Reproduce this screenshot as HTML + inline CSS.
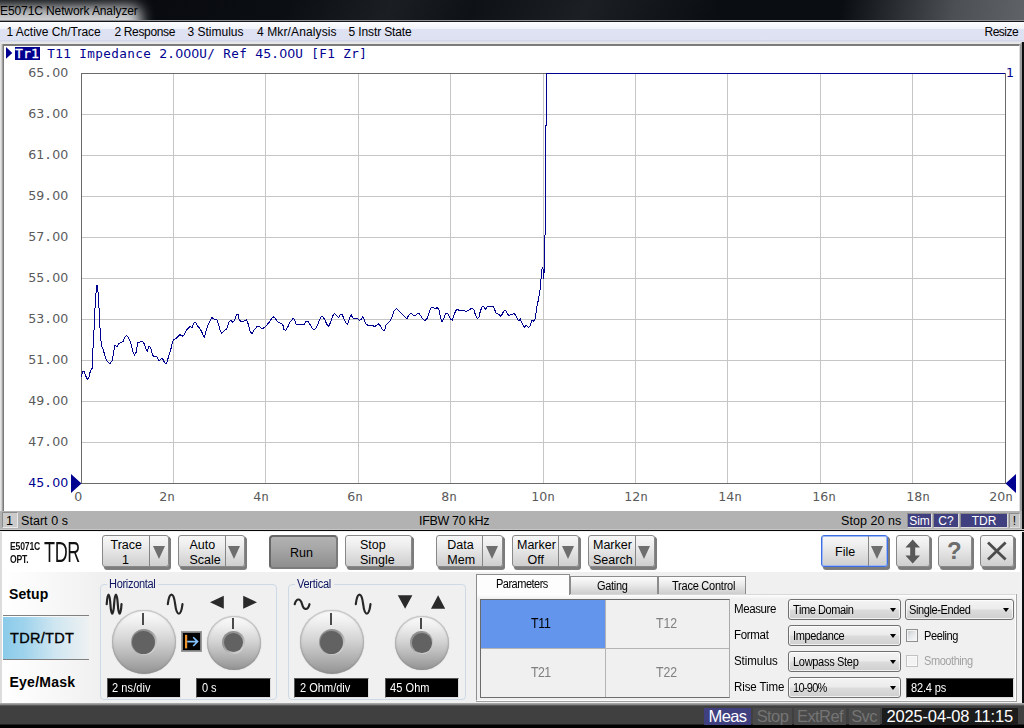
<!DOCTYPE html>
<html lang="en">
<head>
<meta charset="utf-8">
<title>E5071C Network Analyzer</title>
<style>
*{box-sizing:border-box;margin:0;padding:0}
html,body{width:1024px;height:728px;overflow:hidden;background:#0b0e13}
body{position:relative;font-family:"Liberation Sans",sans-serif;font-size:12px;color:#000}
.abs{position:absolute}
/* title bar */
#title{left:0;top:0;width:1024px;height:21px;overflow:hidden;
 background:
  linear-gradient(100deg,rgba(0,0,0,0) 0,rgba(0,0,0,0) 82%,rgba(98,102,106,.75) 93%,rgba(100,104,108,.95) 100%),
  linear-gradient(115deg,#05070a 0,#0b0e13 28%,#1b1f24 38%,#0e1116 46%,#1c2025 57%,#0a0d12 70%,#0a0d12 100%);}
#glow{position:absolute;left:-30px;top:6px;width:171px;height:40px;background:#cdcfd1;filter:blur(7px);border-radius:8px}
#title span{position:absolute;left:0;top:3.5px;font-size:12px;letter-spacing:-.1px;color:#000;white-space:nowrap}
#tline{left:0;top:20px;width:1024px;height:2px;background:linear-gradient(#8d9094 0,#8d9094 50%,#15171a 50%,#15171a 100%)}
/* menu */
#menu{left:0;top:22px;width:1024px;height:20px;background:linear-gradient(#fdfdff 0,#f1f3fb 34%,#dfe2f3 36%,#dde1f2 88%,#cfd3e6 94%,#e4e6ee 100%)}
#menu span{position:absolute;top:3px;font-size:12px;white-space:nowrap;color:#000}
/* plot window */
#win{left:0;top:42px;width:1022px;height:470px;background:#fff;border-style:solid;border-color:#e6e6e6 #9c9c9c #fff #dcdcdc;border-width:2px 2px 0 1px}
#win2{left:1px;top:44px;width:1019px;height:467px;border-style:solid;border-color:#7c7c7c #dedede #fff transparent;border-width:2px 1px 0 3px}
#win3{left:0;top:44px;width:4px;height:467px;background:linear-gradient(90deg,#e4e4e4 0,#e4e4e4 25%,#cecece 25%,#cecece 50%,#a2a2a2 50%,#a2a2a2 75%,#7a7a7a 75%,#7a7a7a 100%)}
#win4{left:3px;top:44px;width:1016px;height:1px;background:#6a6a6a}
#redge{left:1022px;top:42px;width:2px;height:686px;background:#0c0d0f}
/* channel status */
#cstat{left:0;top:511px;width:1022px;height:18px;background:#b2b2b2}
#cstat .t{position:absolute;top:2.5px;font-size:12.5px;letter-spacing:.05px;white-space:nowrap}
.sb{position:absolute;top:1.5px;height:15.5px;background:#404080;color:#fff;font-size:12px;text-align:center;line-height:15px;border:1px solid;border-color:#8c8c8c #dcdcdc #dcdcdc #8c8c8c}
#sep1{left:0;top:529px;width:1024px;height:3px;background:linear-gradient(#c6c6c6 0,#c6c6c6 33.3%,#080808 33.3%,#080808 70%,#f2f2f2 70%,#f2f2f2 100%)}
/* TDR panel */
#panel{left:0;top:532px;width:1022px;height:171px;background:#f0f0f0;border-left:2px solid #dcdcdc}
#ptop{left:2px;top:532px;width:1018px;height:40px;background:#fff}
#bbar{left:0;top:703px;width:1024px;height:25px;background:linear-gradient(#b4b4b4 0,#8a8a8a 6%,#404040 12%,#404040 84%,#000 88%,#000 100%)}
/*PCSS*/
.btn{position:absolute;top:535px;height:32px;border:1px solid #888;border-radius:3px;background:linear-gradient(#f8f8f8 0,#ececec 35%,#cecece 100%);box-shadow:1px 1px 0 #7c7c7c,2px 2px 0 #7c7c7c,2px 3px 0 #808080}
.btn i{position:absolute;top:0;width:1px;height:30px;background:#858585}
.btn b{position:absolute;top:10px;width:0;height:0;border-left:6.5px solid transparent;border-right:6.5px solid transparent;border-top:13px solid #6e6e6e}
.bt{position:absolute;font-size:12.5px;white-space:nowrap;line-height:14px;color:#000}
.knob{position:absolute;border-radius:50%;background:linear-gradient(180deg,#fbfbfb 0,#f0f0f0 18%,#d6d6d6 45%,#b6b6b6 72%,#929292 100%);box-shadow:inset 0 0 0 1px rgba(150,150,150,.35),inset 0 0 2.5px rgba(110,110,110,.55),0 0 1px rgba(130,130,130,.7)}
.knob u{position:absolute;border-radius:50%;background:linear-gradient(140deg,#858585 0,#9a9a9a 40%,#e2e2e2 100%)}
.knob u:after{content:'';position:absolute;left:1.7px;top:1.7px;right:1.7px;bottom:1.7px;border-radius:50%;background:#626262}
.knob s{position:absolute;width:2px;background:#4a4a4a}
.grp{position:absolute;border:1px solid #cddae6;border-radius:4px}
.grp span{position:absolute;top:-7px;left:6px;padding:0 2px;background:#f0f0f0;color:#1b2a72;font-size:12px;line-height:12px;letter-spacing:-.75px;white-space:nowrap}
.blk{position:absolute;height:19.5px;background:#000;color:#fff;font-size:12px;line-height:19px;padding-left:5px;letter-spacing:-.45px;white-space:nowrap;border:1px solid;border-color:#555 #ddd #ddd #555}
.ltab{position:absolute;left:9px;font-weight:bold;font-size:14px;white-space:nowrap}
.tab{position:absolute;font-size:12px;text-align:center;letter-spacing:-.8px;white-space:nowrap}
.cell{position:absolute;font-size:14px;text-align:center;color:#808080;letter-spacing:-1px;text-indent:-3px}
.lab{position:absolute;left:733px;font-size:12px;white-space:nowrap;letter-spacing:-.2px}
.cmb{position:absolute;height:21px;border:1px solid #707070;border-radius:3px;background:linear-gradient(#f4f4f4 0,#ebebeb 48%,#dcdcdc 52%,#cfcfcf 100%);font-size:12px;line-height:21px;padding-left:3px;letter-spacing:-.85px;white-space:nowrap;box-shadow:inset 0 0 0 1px rgba(255,255,255,.7)}
.cmb:after{content:"";position:absolute;right:4px;top:8px;border-left:3.5px solid transparent;border-right:3.5px solid transparent;border-top:4px solid #000}
.chk{position:absolute;left:905.5px;width:12.5px;height:12.5px;border:1px solid #8e8f8f;background:linear-gradient(135deg,#c4c8cc 0,#e6e8ea 50%,#fafafa 100%);box-shadow:inset 0 0 0 1px #f4f4f4}
.st{position:absolute;top:708px;height:17px;font-size:16.5px;line-height:17px;text-align:center;color:#747474;background:#4a4a4a;letter-spacing:-.6px;white-space:nowrap;overflow:hidden}
/*PCSSE*/
</style>
</head>
<body>
<div id="title" class="abs"><div id="glow"></div><span>E5071C Network Analyzer</span></div>
<div id="tline" class="abs"></div>
<div id="menu" class="abs">
<span style="left:6.5px">1 Active Ch/Trace</span>
<span style="left:114.5px;letter-spacing:-.35px">2 Response</span>
<span style="left:187.5px">3 Stimulus</span>
<span style="left:257px;letter-spacing:.12px">4 Mkr/Analysis</span>
<span style="left:348.5px;letter-spacing:-.12px">5 Instr State</span>
<span style="left:984.5px;letter-spacing:-.5px">Resize</span>
</div>
<div id="redge" class="abs"></div>
<div id="win" class="abs"></div>
<div id="win2" class="abs"></div><div id="win3" class="abs"></div>
<!--PLOTS-->
<svg class="abs" style="left:0;top:0" width="1024" height="728" viewBox="0 0 1024 728" shape-rendering="crispEdges">
<path d="M173.5 73.5V483.5M265.5 73.5V483.5M358.5 73.5V483.5M450.5 73.5V483.5M543.5 73.5V483.5M635.5 73.5V483.5M727.5 73.5V483.5M820.5 73.5V483.5M912.5 73.5V483.5M81.5 114.5H1005.5M81.5 155.5H1005.5M81.5 196.5H1005.5M81.5 237.5H1005.5M81.5 278.5H1005.5M81.5 319.5H1005.5M81.5 360.5H1005.5M81.5 401.5H1005.5M81.5 442.5H1005.5" stroke="#c6c6c6" stroke-width="1" fill="none"/>
<rect x="81.5" y="73.5" width="924.0" height="410.0" fill="none" stroke="#6a6a6a" stroke-width="1"/>
<polyline shape-rendering="crispEdges" points="81.3,377.1 82.6,371.8 84.2,371.3 85.9,376.3 87.2,379.6 88.9,377.1 90.5,370.5 92.1,368.5 92.5,355.7 93.8,335.9 94.6,314.5 95.8,294.7 96.8,285.7 97.6,285.2 98.2,294.7 99.1,309.5 99.9,326 100.7,339.2 101.7,346.6 103.2,349.1 104.8,355.7 106.5,360.3 108.5,362.6 110.3,363.6 112.2,360.3 113.6,352.4 114.7,345 117.2,346.6 119.2,343.3 123,341.7 125.1,336.7 126.4,335.4 128.4,337.5 130.7,342.5 132.8,351.5 134.5,355.3 136.1,352.4 137.8,342.8 140.3,341.8 142.4,341.3 144.4,344.1 146,349.1 147.3,351.5 148.8,346.6 150.5,347.1 151.8,352.4 153.1,355.7 155.1,357 156.7,356.5 159.2,360.9 160.8,359 162.5,358.6 164.6,362.6 166.3,363.6 167.4,360.6 169.1,354.8 170.7,349.9 172.4,342.5 174,339.5 176.8,337.9 179.8,334.6 182.8,336.2 184.4,334.3 186.7,329.6 189.7,326.8 192.1,327.3 193.8,323 195.4,322.4 197.9,326.3 200.4,329.3 202.5,333.4 204.2,337.5 206.1,331 208.6,323.5 211.9,317.4 214.4,319.4 216.9,319.8 218.5,324.4 220.1,330.1 221.8,333.4 224.3,330.6 226.7,329 229.2,321.4 230.9,320.2 232.8,322.5 234.7,319.8 236.6,314.4 238.1,314.7 239.4,320.3 241.3,321.4 244.1,321.1 246.4,319.8 248.4,324.5 250.3,332.3 252.2,333.4 254.2,330 256.6,326.9 258.9,326.4 261.3,328.1 263.6,328.1 266.7,325.3 269.8,321.4 271.9,318.3 273.8,316.7 276.1,319.8 278.8,322.5 281.6,323.4 283.1,325.6 283.9,329.7 285.9,330.3 287.8,326.9 290.2,321.9 293.3,318.3 294.8,320.3 295.9,323.8 298,325 304.2,324.5 305.8,321.9 308.1,321.4 310,324.5 312,328.1 314.1,329.7 316.3,327.7 318.3,323 320.6,317.2 322.5,316.7 324.5,319.1 326.6,323.8 328.4,326.6 330.8,321.9 332.8,315.9 334.4,313.1 336.6,315.6 338.6,317.5 340.6,314.4 342.2,314.4 344.1,319.1 345.9,323 347.5,324.5 349.5,318.3 351.1,314.4 352.7,318 357.3,318.4 359.7,320.3 361.6,319.1 362.5,316.7 364.1,319.4 365.6,323.4 368.3,325.8 372.2,325.3 374.5,326.6 376.6,325.3 378.4,323.8 380.8,326.6 382.8,330 384.7,330.3 385.9,325.3 388.1,323 390.5,320.3 392,316.7 394.1,310.9 396.3,308.4 406.9,318.6 408.8,315.2 410.8,313.1 413.4,315.3 415.9,315.3 417.5,313.3 419.4,313.6 421.7,317.5 424.8,320.6 426.9,318.8 428.8,314.1 430.6,308.1 432.7,307.7 435,308.4 437.3,307.8 438.9,309.7 440.5,316.7 442,322.2 443.6,319.1 445.6,313.6 447.2,313.1 449.1,315.9 450.9,319.4 452.2,320.3 453.8,315.9 455.6,310.9 457.2,309.2 460,310.9 461.6,310.2 463.9,310.5 465.9,311.6 469.4,309.7 471.7,308.1 473.8,309.7 475.6,315.2 477.5,318.8 478.8,317.5 480.3,311.3 482.2,306.6 483.8,306.9 485.8,309.7 487.3,306.6 492.8,306.3 494.4,308.9 495.9,312.8 498.3,314.1 500.9,316.3 502.5,313.6 504.1,310.5 505.6,310.5 507.2,313.6 508.8,315.6 511.6,314.4 514.4,313.6 516.3,316.7 518.6,320.9 520.2,318.8 521.7,322.5 524.1,327.3 526.4,325.3 528.4,327.7 530,326.1 531.9,320.3 533.4,321.4 535.3,318.3 536.5,309 538.5,299.1 540.1,289.2 541.1,277.7 541.4,271.1 542.6,267.3 543.1,269.4 543.2,278.5 544.1,272.7 544.5,236.5 545.5,234 545.5,126 546.5,125 546.5,73.5 1005,73.5" fill="none" stroke="#000090" stroke-width="1" stroke-linejoin="round"/>
<path shape-rendering="auto" d="M71 474L81.5 483.5L71 493Z M1016 474L1005.5 483.5L1016 493Z M6 47L12.3 52.9L6 58.8Z" fill="#000090"/>
<rect x="15" y="47" width="25" height="13" fill="#000090"/>
<g font-family="'DejaVu Sans Mono','Liberation Mono',monospace" font-size="12.6" shape-rendering="auto">
<text y="57.5" fill="#fff" stroke="#fff" stroke-width=".35"><tspan font-family="'DejaVu Sans Mono','Liberation Mono',monospace" x="15.2 23.2">Tr</tspan><tspan font-family="'DejaVu Sans','Liberation Mono',monospace" x="31.2">1</tspan></text>
<text y="57.5" fill="#000090"><tspan font-family="'DejaVu Sans Mono','Liberation Mono',monospace" x="47.2">T</tspan><tspan font-family="'DejaVu Sans','Liberation Mono',monospace" x="55.2 63.2 71.2">11 </tspan><tspan font-family="'DejaVu Sans Mono','Liberation Mono',monospace" x="79.2 87.2 95.2 103.2 111.2 119.2 127.2 135.2 143.2 151.2">Impedance </tspan><tspan font-family="'DejaVu Sans','Liberation Mono',monospace" x="159.2">2</tspan><tspan font-family="'DejaVu Sans Mono','Liberation Mono',monospace" x="167.2">.</tspan><tspan font-family="'DejaVu Sans','Liberation Mono',monospace" x="175.2 183.2 191.2">000</tspan><tspan font-family="'DejaVu Sans Mono','Liberation Mono',monospace" x="199.2 207.2 215.2 223.2 231.2 239.2 247.2">U/ Ref </tspan><tspan font-family="'DejaVu Sans','Liberation Mono',monospace" x="255.2 263.2">45</tspan><tspan font-family="'DejaVu Sans Mono','Liberation Mono',monospace" x="271.2">.</tspan><tspan font-family="'DejaVu Sans','Liberation Mono',monospace" x="279.2 287.2">00</tspan><tspan font-family="'DejaVu Sans Mono','Liberation Mono',monospace" x="295.2 303.2 311.2 319.2">U [F</tspan><tspan font-family="'DejaVu Sans','Liberation Mono',monospace" x="327.2 335.2">1 </tspan><tspan font-family="'DejaVu Sans Mono','Liberation Mono',monospace" x="343.2 351.2 359.2">Zr]</tspan></text>
<text y="77" fill="#000090"><tspan font-family="'DejaVu Sans','Liberation Mono',monospace" x="1006">1</tspan></text>
<text y="77.4" fill="#5a5a5a"><tspan font-family="'DejaVu Sans','Liberation Mono',monospace" x="28.2 36.2">65</tspan><tspan font-family="'DejaVu Sans Mono','Liberation Mono',monospace" x="44.2">.</tspan><tspan font-family="'DejaVu Sans','Liberation Mono',monospace" x="52.2 60.2">00</tspan></text>
<text y="118.4" fill="#5a5a5a"><tspan font-family="'DejaVu Sans','Liberation Mono',monospace" x="28.2 36.2">63</tspan><tspan font-family="'DejaVu Sans Mono','Liberation Mono',monospace" x="44.2">.</tspan><tspan font-family="'DejaVu Sans','Liberation Mono',monospace" x="52.2 60.2">00</tspan></text>
<text y="159.4" fill="#5a5a5a"><tspan font-family="'DejaVu Sans','Liberation Mono',monospace" x="28.2 36.2">61</tspan><tspan font-family="'DejaVu Sans Mono','Liberation Mono',monospace" x="44.2">.</tspan><tspan font-family="'DejaVu Sans','Liberation Mono',monospace" x="52.2 60.2">00</tspan></text>
<text y="200.4" fill="#5a5a5a"><tspan font-family="'DejaVu Sans','Liberation Mono',monospace" x="28.2 36.2">59</tspan><tspan font-family="'DejaVu Sans Mono','Liberation Mono',monospace" x="44.2">.</tspan><tspan font-family="'DejaVu Sans','Liberation Mono',monospace" x="52.2 60.2">00</tspan></text>
<text y="241.4" fill="#5a5a5a"><tspan font-family="'DejaVu Sans','Liberation Mono',monospace" x="28.2 36.2">57</tspan><tspan font-family="'DejaVu Sans Mono','Liberation Mono',monospace" x="44.2">.</tspan><tspan font-family="'DejaVu Sans','Liberation Mono',monospace" x="52.2 60.2">00</tspan></text>
<text y="282.4" fill="#5a5a5a"><tspan font-family="'DejaVu Sans','Liberation Mono',monospace" x="28.2 36.2">55</tspan><tspan font-family="'DejaVu Sans Mono','Liberation Mono',monospace" x="44.2">.</tspan><tspan font-family="'DejaVu Sans','Liberation Mono',monospace" x="52.2 60.2">00</tspan></text>
<text y="323.4" fill="#5a5a5a"><tspan font-family="'DejaVu Sans','Liberation Mono',monospace" x="28.2 36.2">53</tspan><tspan font-family="'DejaVu Sans Mono','Liberation Mono',monospace" x="44.2">.</tspan><tspan font-family="'DejaVu Sans','Liberation Mono',monospace" x="52.2 60.2">00</tspan></text>
<text y="364.4" fill="#5a5a5a"><tspan font-family="'DejaVu Sans','Liberation Mono',monospace" x="28.2 36.2">51</tspan><tspan font-family="'DejaVu Sans Mono','Liberation Mono',monospace" x="44.2">.</tspan><tspan font-family="'DejaVu Sans','Liberation Mono',monospace" x="52.2 60.2">00</tspan></text>
<text y="405.4" fill="#5a5a5a"><tspan font-family="'DejaVu Sans','Liberation Mono',monospace" x="28.2 36.2">49</tspan><tspan font-family="'DejaVu Sans Mono','Liberation Mono',monospace" x="44.2">.</tspan><tspan font-family="'DejaVu Sans','Liberation Mono',monospace" x="52.2 60.2">00</tspan></text>
<text y="446.4" fill="#5a5a5a"><tspan font-family="'DejaVu Sans','Liberation Mono',monospace" x="28.2 36.2">47</tspan><tspan font-family="'DejaVu Sans Mono','Liberation Mono',monospace" x="44.2">.</tspan><tspan font-family="'DejaVu Sans','Liberation Mono',monospace" x="52.2 60.2">00</tspan></text>
<text y="487.4" fill="#000090"><tspan font-family="'DejaVu Sans','Liberation Mono',monospace" x="28.2 36.2">45</tspan><tspan font-family="'DejaVu Sans Mono','Liberation Mono',monospace" x="44.2">.</tspan><tspan font-family="'DejaVu Sans','Liberation Mono',monospace" x="52.2 60.2">00</tspan></text>
<text y="501" fill="#5a5a5a"><tspan font-family="'DejaVu Sans','Liberation Mono',monospace" x="74.2">0</tspan></text>
<text y="501" fill="#5a5a5a"><tspan font-family="'DejaVu Sans','Liberation Mono',monospace" x="159.2">2</tspan><tspan font-family="'DejaVu Sans Mono','Liberation Mono',monospace" x="167.2">n</tspan></text>
<text y="501" fill="#5a5a5a"><tspan font-family="'DejaVu Sans','Liberation Mono',monospace" x="253.2">4</tspan><tspan font-family="'DejaVu Sans Mono','Liberation Mono',monospace" x="261.2">n</tspan></text>
<text y="501" fill="#5a5a5a"><tspan font-family="'DejaVu Sans','Liberation Mono',monospace" x="347.2">6</tspan><tspan font-family="'DejaVu Sans Mono','Liberation Mono',monospace" x="355.2">n</tspan></text>
<text y="501" fill="#5a5a5a"><tspan font-family="'DejaVu Sans','Liberation Mono',monospace" x="441.2">8</tspan><tspan font-family="'DejaVu Sans Mono','Liberation Mono',monospace" x="449.2">n</tspan></text>
<text y="501" fill="#5a5a5a"><tspan font-family="'DejaVu Sans','Liberation Mono',monospace" x="531.2 539.2">10</tspan><tspan font-family="'DejaVu Sans Mono','Liberation Mono',monospace" x="547.2">n</tspan></text>
<text y="501" fill="#5a5a5a"><tspan font-family="'DejaVu Sans','Liberation Mono',monospace" x="624.2 632.2">12</tspan><tspan font-family="'DejaVu Sans Mono','Liberation Mono',monospace" x="640.2">n</tspan></text>
<text y="501" fill="#5a5a5a"><tspan font-family="'DejaVu Sans','Liberation Mono',monospace" x="718.2 726.2">14</tspan><tspan font-family="'DejaVu Sans Mono','Liberation Mono',monospace" x="734.2">n</tspan></text>
<text y="501" fill="#5a5a5a"><tspan font-family="'DejaVu Sans','Liberation Mono',monospace" x="812.2 820.2">16</tspan><tspan font-family="'DejaVu Sans Mono','Liberation Mono',monospace" x="828.2">n</tspan></text>
<text y="501" fill="#5a5a5a"><tspan font-family="'DejaVu Sans','Liberation Mono',monospace" x="906.2 914.2">18</tspan><tspan font-family="'DejaVu Sans Mono','Liberation Mono',monospace" x="922.2">n</tspan></text>
<text y="501" fill="#5a5a5a"><tspan font-family="'DejaVu Sans','Liberation Mono',monospace" x="989.2 997.2">20</tspan><tspan font-family="'DejaVu Sans Mono','Liberation Mono',monospace" x="1005.2">n</tspan></text>
</g></svg>
<!--PLOTE-->
<div id="cstat" class="abs">
<div class="abs" style="left:2px;top:1px;width:16px;height:16px;background:#cbcbcb;border:1px solid;border-color:#8c8c8c #e8e8e8 #e8e8e8 #8c8c8c"></div>
<span class="t" style="left:6px">1</span>
<span class="t" style="left:21px">Start 0 s</span>
<span class="t" style="left:419px;letter-spacing:-.32px">IFBW 70 kHz</span>
<span class="t" style="left:841px">Stop 20 ns</span>
<div class="sb" style="left:907px;width:25px">Sim</div>
<div class="sb" style="left:933px;width:26px">C?</div>
<div class="sb" style="left:960px;width:48px">TDR</div>
<div class="sb" style="left:1009px;width:11px;background:#c4c4c4;color:#000">!</div>
</div>
<div id="sep1" class="abs"></div>
<div id="panel" class="abs"></div>
<div id="ptop" class="abs"></div>
<!--PANELS-->
<div class="abs" style="left:10px;top:540px;font-size:10.5px;font-weight:bold;line-height:13px;letter-spacing:-.2px;transform:scaleX(.82);transform-origin:0 0;white-space:nowrap;color:#111">E5071C<br>OPT.</div>
<div class="abs" style="left:44px;top:534px;font-size:29px;line-height:36px;transform:scaleX(.62);transform-origin:0 0;white-space:nowrap;color:#111;letter-spacing:-.5px">TDR</div>
<div class="btn" style="left:102px;width:67px"><i style="left:46px"></i><b style="left:49.5px"></b></div>
<div class="bt" style="left:110.5px;top:538px">Trace</div>
<div class="bt" style="left:122px;top:553px">1</div>
<div class="btn" style="left:178px;width:67px"><i style="left:45.69999999999999px"></i><b style="left:49.19999999999999px"></b></div>
<div class="bt" style="left:189.5px;top:538px">Auto</div>
<div class="bt" style="left:189.5px;top:553px">Scale</div>
<div class="abs" style="left:269px;top:535px;width:69px;height:34px;border-radius:4px;background:linear-gradient(#b2b2b2 0,#a6a6a6 40%,#8e8e8e 100%);border:2px solid #686868;border-right-color:#7a7a7a;border-bottom-color:#7c7c7c"></div>
<div class="bt" style="left:290px;top:546px">Run</div>
<div class="btn" style="left:345px;width:67px"></div>
<div class="bt" style="left:360px;top:538px">Stop</div>
<div class="bt" style="left:360px;top:553px">Single</div>
<div class="btn" style="left:436px;width:67px"><i style="left:45.39999999999998px"></i><b style="left:48.89999999999998px"></b></div>
<div class="bt" style="left:447.3px;top:538px">Data</div>
<div class="bt" style="left:447.3px;top:553px">Mem</div>
<div class="btn" style="left:512px;width:67px"><i style="left:45.39999999999998px"></i><b style="left:48.89999999999998px"></b></div>
<div class="bt" style="left:517px;top:538px">Marker</div>
<div class="bt" style="left:527.5px;top:553px">Off</div>
<div class="btn" style="left:588px;width:67px"><i style="left:45.5px"></i><b style="left:49.0px"></b></div>
<div class="bt" style="left:593px;top:538px">Marker</div>
<div class="bt" style="left:593px;top:553px">Search</div>
<div class="btn" style="left:821px;width:67px;border-color:#3c6fe2;box-shadow:inset 0 0 0 1px #9db8f2,1px 1px 0 #7c7c7c,2px 2px 0 #7c7c7c,2px 3px 0 #808080"><i style="left:45.5px"></i><b style="left:49.0px"></b></div>
<div class="bt" style="left:835px;top:544.5px">File</div>
<div class="btn" style="left:896px;width:33.5px"></div>
<div class="btn" style="left:938px;width:33.5px"></div>
<div class="btn" style="left:980px;width:33.5px"></div>
<svg class="abs" style="left:896px;top:535px" width="120" height="33" viewBox="0 0 120 33"><path d="M16.7 4.5L24 12.5H19.2V20.5H24L16.7 28.5L9.4 20.5H14.2V12.5H9.4Z" fill="#585858"/><path d="M92 7.6L109.6 24.6M109.6 7.6L92 24.6" stroke="#4c4c4c" stroke-width="2.8" fill="none"/><text x="51" y="24" font-family="Liberation Sans,sans-serif" font-size="24" font-weight="bold" fill="#6c6c6c">?</text></svg>
<div class="abs" style="left:2px;top:572px;width:98px;height:131px;background:linear-gradient(90deg,#fff 0,#fbfbfb 30%,#f0f0f0 100%)"></div>
<div class="abs" style="left:3px;top:617px;width:86px;height:42px;background:linear-gradient(90deg,#8acbea 0,#9fd3ec 25%,#cfe6f1 60%,#eef1f2 100%)"></div>
<div class="abs" style="left:3px;top:615px;width:86px;height:1px;background:#808080"></div>
<div class="abs" style="left:3px;top:659px;width:86px;height:1px;background:#808080"></div>
<div class="ltab" style="top:586px;letter-spacing:.1px">Setup</div>
<div class="ltab" style="top:630px;left:10px;font-weight:normal;letter-spacing:.3px;font-size:14.5px;-webkit-text-stroke:.35px #000">TDR/TDT</div>
<div class="ltab" style="top:674px;left:9.5px;letter-spacing:.25px">Eye/Mask</div>
<div class="grp" style="left:100px;top:584px;width:177px;height:116px"><span style="width:51px;height:12px"></span></div>
<span class="abs" style="left:109px;top:577px;font-size:12px;line-height:14px;color:#0c1560;white-space:nowrap;letter-spacing:-0.348px;transform:scaleX(0.92);transform-origin:0 0">Horizontal</span>
<div class="grp" style="left:288px;top:584px;width:178px;height:116px"><span style="width:39px;height:12px"></span></div>
<span class="abs" style="left:297.2px;top:577px;font-size:12px;line-height:14px;color:#0c1560;white-space:nowrap;letter-spacing:-0.300px;transform:scaleX(0.92);transform-origin:0 0">Vertical</span>
<div class="knob" style="left:111.69999999999999px;top:610.2px;width:64px;height:64px"><u style="left:18.9px;top:18.9px;width:26.2px;height:26.2px"></u><s style="left:30.200000000000017px;top:3.0px;height:11.699999999999932px"></s></div>
<div class="knob" style="left:206.6px;top:615.5px;width:54px;height:54px"><u style="left:15.6px;top:15.6px;width:22.8px;height:22.8px"></u><s style="left:25.5px;top:2.7000000000000455px;height:10.599999999999909px"></s></div>
<div class="knob" style="left:299.7px;top:610.2px;width:64px;height:64px"><u style="left:18.9px;top:18.9px;width:26.2px;height:26.2px"></u><s style="left:30.19999999999999px;top:3.0px;height:11.699999999999932px"></s></div>
<div class="knob" style="left:394.8px;top:615.8px;width:54px;height:54px"><u style="left:15.6px;top:15.6px;width:22.8px;height:22.8px"></u><s style="left:25.30000000000001px;top:2.400000000000091px;height:10.599999999999909px"></s></div>
<svg class="abs" style="left:100px;top:590px" width="370" height="28" viewBox="100 590 370 28" fill="none" stroke="#262626" stroke-linecap="round"><path d="M106.7 604.2c.75 -12.7 2.95 -12.7 3.7 0s2.95 12.7 3.7 0s2.95 -12.7 3.7 0s2.95 12.7 3.7 0" stroke-width="2.2"/><path d="M167.8 604.2c1.6 -12.7 5.75 -12.7 7.35 0s5.75 12.7 7.35 0" stroke-width="2.2"/><path d="M210 602.3L223.8 595.8V608.8Z M257 602.3L243.2 595.8V608.8Z" fill="#2a2a2a" stroke="none"/><path d="M294.7 604.2c1.7 -6.3 5.7 -6.3 7.4 0s5.7 6.3 7.4 0" stroke-width="2.2"/><path d="M355.8 604.2c1.6 -12.7 5.75 -12.7 7.35 0s5.75 12.7 7.35 0" stroke-width="2.2"/><path d="M397.8 595.2H412.4L405.1 608.8Z M431 608.8H445.2L438.1 595.2Z" fill="#2a2a2a" stroke="none"/></svg>
<svg class="abs" style="left:181px;top:631px" width="21" height="21" viewBox="0 0 21 21"><rect x=".5" y=".5" width="20" height="20" fill="#000" stroke="#9a9a9a"/><rect x="1.5" y="1.5" width="18" height="18" fill="none" stroke="#e6e6e6" stroke-opacity=".55"/><rect x="4" y="3.8" width="2.2" height="13.6" fill="#f0922a"/><path d="M6.2 10.6H16.2M12.2 6.2L16.6 10.6L12.2 15" stroke="#86c3ff" stroke-width="1.6" fill="none"/></svg>
<div class="blk" style="left:106.5px;top:678px;width:74px"></div>
<span class="abs" style="left:112px;top:681px;font-size:12px;line-height:14px;color:#fff;white-space:nowrap;letter-spacing:0.075px;transform:scaleX(0.92);transform-origin:0 0">2 ns/div</span>
<div class="blk" style="left:196px;top:678px;width:74.5px"></div>
<span class="abs" style="left:202px;top:681px;font-size:12px;line-height:14px;color:#fff;white-space:nowrap;letter-spacing:-0.155px;transform:scaleX(0.92);transform-origin:0 0">0 s</span>
<div class="blk" style="left:294px;top:678px;width:75px"></div>
<span class="abs" style="left:300px;top:681px;font-size:12px;line-height:14px;color:#fff;white-space:nowrap;letter-spacing:-0.001px;transform:scaleX(0.92);transform-origin:0 0">2 Ohm/div</span>
<div class="blk" style="left:384.5px;top:678px;width:74.5px"></div>
<span class="abs" style="left:389.8px;top:681px;font-size:12px;line-height:14px;color:#fff;white-space:nowrap;letter-spacing:0.060px;transform:scaleX(0.92);transform-origin:0 0">45 Ohm</span>
<div class="abs" style="left:476px;top:594px;width:540px;height:107px;border:1px solid;border-color:#d8d8d8 #fdfdfd #fdfdfd #8e8e8e;background:#f0f0f0"></div>
<div class="abs" style="left:1016px;top:594px;width:1px;height:108px;background:#a8a8a8"></div><div class="abs" style="left:476px;top:701px;width:541px;height:1px;background:#a0a0a0"></div>
<div class="tab" style="left:570px;top:576px;width:88px;height:18px;line-height:19px;border:1px solid #8c8c8c;border-bottom:0;background:linear-gradient(#fcfcfc,#eaeaea 45%,#cdcdcd);"></div>
<span class="abs" style="left:596.6px;top:578.5px;font-size:12px;line-height:14px;color:#000;white-space:nowrap;letter-spacing:-0.349px;transform:scaleX(0.92);transform-origin:0 0">Gating</span>
<div class="tab" style="left:658px;top:576px;width:88px;height:18px;line-height:19px;border:1px solid #8c8c8c;border-bottom:0;background:linear-gradient(#fcfcfc,#eaeaea 45%,#cdcdcd)"></div>
<span class="abs" style="left:671.7px;top:578.5px;font-size:12px;line-height:14px;color:#000;white-space:nowrap;letter-spacing:-0.273px;transform:scaleX(0.92);transform-origin:0 0">Trace Control</span>
<div class="tab" style="left:476px;top:574px;width:94px;height:22px;line-height:19px;border:1px solid #8c8c8c;border-bottom:0;background:#fdfdfd;padding-right:2px"></div>
<div class="abs" style="left:477px;top:595px;width:538px;height:4px;background:linear-gradient(#fdfdfd,#f0f0f0)"></div>
<span class="abs" style="left:496px;top:577px;font-size:12px;line-height:14px;color:#000;white-space:nowrap;letter-spacing:-0.572px;transform:scaleX(0.92);transform-origin:0 0">Parameters</span>
<div class="abs" style="left:480px;top:599px;width:250px;height:99px;border:1px solid;border-color:#6a6a6a #a9a9a9 #6f6f6f #6a6a6a;background:#f0f0f0"></div>
<div class="abs" style="left:481px;top:600px;width:124px;height:48px;background:#6495ed"></div>
<div class="abs" style="left:605px;top:600px;width:1px;height:97px;background:#b4b4b4"></div>
<div class="abs" style="left:481px;top:648px;width:248px;height:1px;background:#b4b4b4"></div>
<span class="abs" style="left:531px;top:615.3px;font-size:14px;line-height:16px;color:#000;white-space:nowrap;letter-spacing:-0.233px;transform:scaleX(0.88);transform-origin:0 0">T11</span>
<span class="abs" style="left:656.4px;top:615.3px;font-size:14px;line-height:16px;color:#808080;white-space:nowrap;letter-spacing:-0.087px;transform:scaleX(0.88);transform-origin:0 0">T12</span>
<span class="abs" style="left:531px;top:664px;font-size:14px;line-height:16px;color:#808080;white-space:nowrap;letter-spacing:-0.579px;transform:scaleX(0.88);transform-origin:0 0">T21</span>
<span class="abs" style="left:656.4px;top:664px;font-size:14px;line-height:16px;color:#808080;white-space:nowrap;letter-spacing:-0.087px;transform:scaleX(0.88);transform-origin:0 0">T22</span>
<span class="abs" style="left:734.2px;top:602.4px;font-size:12px;line-height:14px;color:#000;white-space:nowrap;letter-spacing:-0.420px;transform:scaleX(0.96);transform-origin:0 0">Measure</span>
<span class="abs" style="left:734.2px;top:628.2px;font-size:12px;line-height:14px;color:#000;white-space:nowrap;letter-spacing:-0.327px;transform:scaleX(0.96);transform-origin:0 0">Format</span>
<span class="abs" style="left:734.2px;top:653.7px;font-size:12px;line-height:14px;color:#000;white-space:nowrap;letter-spacing:-0.062px;transform:scaleX(0.96);transform-origin:0 0">Stimulus</span>
<span class="abs" style="left:734.2px;top:680.1px;font-size:12px;line-height:14px;color:#000;white-space:nowrap;letter-spacing:-0.094px;transform:scaleX(0.96);transform-origin:0 0">Rise Time</span>
<div class="cmb" style="left:788px;top:599px;width:113px"></div>
<span class="abs" style="left:792.5px;top:603px;font-size:12px;line-height:14px;color:#000;white-space:nowrap;letter-spacing:-0.468px;transform:scaleX(0.92);transform-origin:0 0">Time Domain</span>
<div class="cmb" style="left:905px;top:599px;width:109px"></div>
<span class="abs" style="left:909px;top:603px;font-size:12px;line-height:14px;color:#000;white-space:nowrap;letter-spacing:-0.434px;transform:scaleX(0.92);transform-origin:0 0">Single-Ended</span>
<div class="cmb" style="left:788px;top:625px;width:113px"></div>
<span class="abs" style="left:792.5px;top:629px;font-size:12px;line-height:14px;color:#000;white-space:nowrap;letter-spacing:-0.389px;transform:scaleX(0.92);transform-origin:0 0">Impedance</span>
<div class="cmb" style="left:788px;top:651px;width:113px"></div>
<span class="abs" style="left:792.5px;top:655px;font-size:12px;line-height:14px;color:#000;white-space:nowrap;letter-spacing:-0.349px;transform:scaleX(0.92);transform-origin:0 0">Lowpass Step</span>
<div class="cmb" style="left:788px;top:677px;width:113px"></div>
<span class="abs" style="left:792.5px;top:681px;font-size:12px;line-height:14px;color:#000;white-space:nowrap;letter-spacing:-0.807px;transform:scaleX(0.92);transform-origin:0 0">10-90%</span>
<div class="chk" style="top:629px"></div><div class="chk" style="top:654.5px;border-color:#c2c2c2;background:#f3f3f3;box-shadow:inset 0 0 0 1px #fafafa"></div>
<span class="abs" style="left:924.3px;top:629.4px;font-size:12px;line-height:14px;color:#000;white-space:nowrap;letter-spacing:-0.455px;transform:scaleX(0.92);transform-origin:0 0">Peeling</span>
<span class="abs" style="left:924.3px;top:654px;font-size:12px;line-height:14px;color:#a2a2a2;white-space:nowrap;letter-spacing:-0.493px;transform:scaleX(0.92);transform-origin:0 0">Smoothing</span>
<div class="blk" style="left:905.5px;top:677.5px;width:108.5px;height:20px"></div>
<span class="abs" style="left:911px;top:681px;font-size:12px;line-height:14px;color:#fff;white-space:nowrap;letter-spacing:-0.189px;transform:scaleX(0.92);transform-origin:0 0">82.4 ps</span>
<!--PANELE-->
<div id="bbar" class="abs"></div>
<!--BOTTOMS-->
<div class="st" style="left:704px;width:47px;background:#404080;color:#fff">Meas</div>
<div class="st" style="left:753px;width:39px">Stop</div>
<div class="st" style="left:794px;width:52px">ExtRef</div>
<div class="st" style="left:848.5px;width:31px">Svc</div>
<div class="st" style="left:881.5px;width:136.5px;background:#1c1c1c;color:#fff;letter-spacing:-.15px">2025-04-08 11:15</div>
<!--BOTTOME-->
</body>
</html>
